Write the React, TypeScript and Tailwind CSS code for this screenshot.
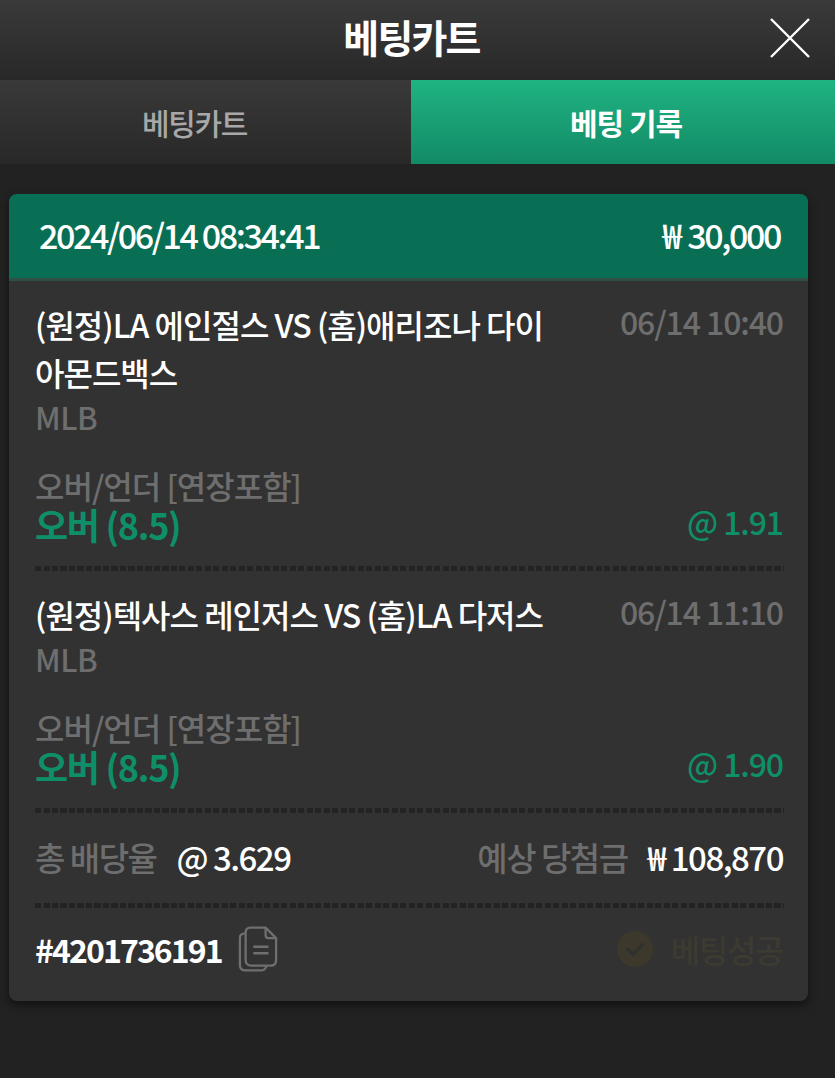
import React from "react";

const font = { fontFamily: '"Noto Sans CJK KR", "Noto Sans", sans-serif' };

const Dashed = () => (
  <div className="h-[5px] w-[749px] bg-[repeating-linear-gradient(90deg,#232323_0_6px,transparent_6px_8.5px)]" />
);

const BetRow = ({
  title,
  time,
  odds,
}: {
  title: React.ReactNode;
  time: string;
  odds: string;
}) => (
  <div>
    <div className="flex items-start justify-between">
      <div className="w-[530px] text-[32px] leading-[48px] font-medium tracking-[-1px] text-white">
        {title}
      </div>
      <div className="text-[32px] leading-[42px] tracking-[-1.1px] text-[#6e6e6e] font-medium">
        {time}
      </div>
    </div>
    <div className="text-[31px] leading-[42px] tracking-[-0.5px] text-[#6e6e6e] font-medium">
      MLB
    </div>
    <div className="mt-[25px] text-[32px] leading-[44px] tracking-[-1px] text-[#6e6e6e] font-medium">
      오버/언더 [연장포함]
    </div>
    <div className="flex items-center justify-between -mt-[3px] h-[40px]">
      <div className="text-[36px] leading-[40px] tracking-[-1.3px] text-[#0f8f68] font-bold">
        오버 (8.5)
      </div>
      <div className="mb-[6px] text-[32px] leading-[36px] tracking-[-1.1px] text-[#0f8f68] font-medium">
        @ {odds}
      </div>
    </div>
  </div>
);

export default function App() {
  return (
    <div
      style={font}
      className="w-[835px] h-[1078px] overflow-hidden bg-[#222222] flex flex-col"
    >
      <div className="relative h-[80px] bg-gradient-to-b from-[#3a3a3a] to-[#282828] flex items-center justify-center pr-[12px]">
        <h1 className="text-[39px] font-bold tracking-[-1.8px] text-white leading-none -mt-[8px]">
          베팅카트
        </h1>
        <button className="absolute right-[25px] top-[18px] text-white">
          <svg width="40" height="40" viewBox="0 0 40 40" fill="none" stroke="currentColor" strokeWidth="2.4">
            <path d="M1 1 L39 39 M39 1 L1 39" />
          </svg>
        </button>
      </div>

      <div className="flex h-[84px]">
        <div className="w-[411px] bg-gradient-to-b from-[#393939] to-[#282828] flex items-center justify-center pr-[22px] text-[30px] font-medium tracking-[-1.4px] text-[#a8a8a8]">
          베팅카트
        </div>
        <div className="flex-1 bg-gradient-to-b from-[#20b482] to-[#128a66] flex items-center justify-center pl-[6px] text-[30px] font-bold tracking-[-1px] text-white">
          베팅 기록
        </div>
      </div>

      <div className="px-[9px] pr-[27px] pt-[30px]">
        <div className="rounded-[8px] bg-[#323232] shadow-[0_4px_10px_rgba(0,0,0,0.5)] overflow-hidden">
          <div className="h-[87px] bg-[#096f54] border-b-[3px] border-[#2f4f45] flex items-center justify-between pl-[30px] pr-[28px] text-[34px] font-medium tracking-[-2.4px] text-white">
            <span className="-mt-[3px]">2024/06/14 08:34:41</span>
            <span className="-mt-[3px] flex gap-[8px]">
              <span>₩</span>
              <span>30,000</span>
            </span>
          </div>

          <div className="pl-[26px] pr-[25px] pt-[19px]">
            <BetRow
              title={
                <>
                  (원정)LA 에인절스 VS (홈)애리조나 다이
                  <br />
                  아몬드백스
                </>
              }
              time="06/14 10:40"
              odds="1.91"
            />
            <div className="mt-[22px]">
              <Dashed />
            </div>
            <div className="mt-[19px]">
              <BetRow title="(원정)텍사스 레인저스 VS (홈)LA 다저스" time="06/14 11:10" odds="1.90" />
            </div>
            <div className="mt-[22px]">
              <Dashed />
            </div>

            <div className="h-[90px] flex items-center justify-between text-[33px] font-medium tracking-[-1.5px]">
              <div className="flex items-center gap-[20px]">
                <span className="text-[#6e6e6e]">총 배당율</span>
                <span className="text-white">@ 3.629</span>
              </div>
              <div className="flex items-center gap-[20px]">
                <span className="text-[#6e6e6e]">예상 당첨금</span>
                <span className="text-white">₩ 108,870</span>
              </div>
            </div>
            <Dashed />

            <div className="h-[93px] pb-[11px] flex items-center justify-between">
              <div className="flex items-center gap-[16px]">
                <span className="text-[32px] font-bold tracking-[-1.9px] text-white">
                  #4201736191
                </span>
                <svg width="40" height="47" viewBox="0 0 42 48" fill="none" stroke="#6f6f6f" strokeWidth="2.4" strokeLinejoin="round">
                  <path d="M8 7 C3.5 7 2 9 2 12 V40 C2 44 4 46 8 46 H24 C27 46 29 44.5 30 41" />
                  <path d="M8 6 C8 3 10 1 13 1 H29 L40 12 V35 C40 38.5 38 41 34 41 H14 C10 41 8 38.5 8 35 Z" />
                  <path d="M29 1 V9 C29 11 30 12 32 12 H40" />
                  <path d="M16 21 H32 M16 28 H32" strokeWidth="2.6" />
                </svg>
              </div>
              <div className="flex items-center gap-[17px] opacity-[0.42]">
                <svg width="38" height="40" viewBox="0 0 40 40">
                  <circle cx="20" cy="20" r="19" fill="#4a4226" />
                  <path d="M11 19 L18 26 L29 14" fill="none" stroke="#2f2f2a" strokeWidth="3.5" />
                </svg>
                <span className="text-[32px] font-medium tracking-[-1.4px] text-[#4a4530]">
                  베팅성공
                </span>
              </div>
            </div>
          </div>
        </div>
      </div>
    </div>
  );
}
